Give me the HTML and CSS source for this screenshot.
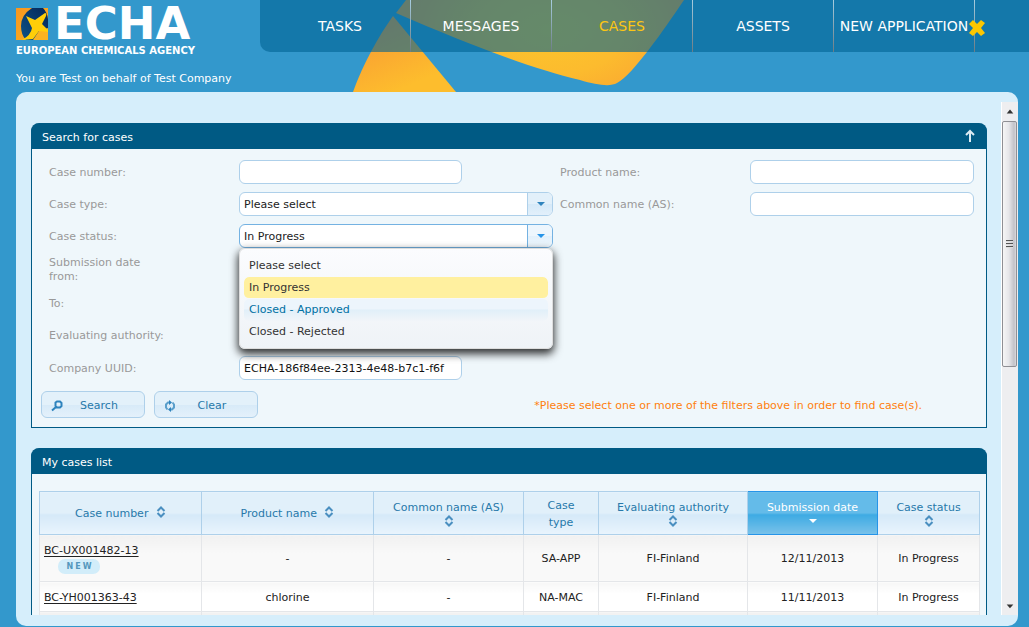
FILE: index.html
```html
<!DOCTYPE html>
<html lang="en">
<head>
<meta charset="utf-8">
<title>ECHA - Cases</title>
<link rel="stylesheet" href="styles.css">
</head>
<body>
<svg class="star" viewBox="0 0 340 92" aria-hidden="true">
  <defs>
    <radialGradient id="beam" gradientUnits="userSpaceOnUse" cx="200" cy="30" r="150" gradientTransform="translate(0 12) scale(1 .6)"><stop offset="0" stop-color="#fdc62c"/><stop offset="0.5" stop-color="#fcbb2e"/><stop offset="1" stop-color="#f9a232"/></radialGradient>
    <linearGradient id="foot" x1="0" y1="0.3" x2="0.4" y2="1"><stop offset="0" stop-color="#f99d33"/><stop offset="1" stop-color="#fdbd2d"/></linearGradient>
  </defs>
  <path fill="url(#foot)" d="M43 16C28 37 13 64 3 92H106Z"/>
  <path fill="url(#beam)" d="M46 13L56 0H334C324 15 310 35 300 48C287 65 275 79 267 83C260 87 247 85 230 80C180 68 120 45 46 13Z"/>
</svg>
<header class="top">
  <div class="brand">
    <svg class="emblem" viewBox="0 0 32 32" aria-hidden="true">
      <defs>
        <linearGradient id="gold" x1="0" y1="0" x2="1" y2="1"><stop offset="0" stop-color="#f8961f"/><stop offset="1" stop-color="#fbb321"/></linearGradient>
        <linearGradient id="navy" x1="0" y1="1" x2="1" y2="0"><stop offset="0" stop-color="#0f5286"/><stop offset="1" stop-color="#042659"/></linearGradient>
      </defs>
      <path fill="url(#gold)" d="M0 0H32V32H0Z"/>
      <path fill="url(#navy)" d="M16 0H27Q31 4 32 11V22Q31 28 27 31L26 32H10Q5 27 5 18Q5 7 16 0Z"/>
      <path fill="#fbb321" d="M23 23L32 20V32H17Z"/>
      <path fill="#ffce08" d="M10 8L19 12L29 5Q31 5 30 8L26 16L32 22V24L23 23L17 31L6 32Q15 27 16 20Z"/>
    </svg>
    <span class="wordmark">ECHA</span>
    <span class="tagline">EUROPEAN CHEMICALS AGENCY</span>
  </div>
  <nav class="menu">
    <a href="#">TASKS</a>
    <a href="#">MESSAGES</a>
    <a href="#" class="current">CASES</a>
    <a href="#">ASSETS</a>
    <a href="#">NEW APPLICATION</a>
    <button class="exit" type="button" aria-label="Log out"><svg viewBox="0 0 16 16" aria-hidden="true"><path fill="#fdc700" d="M0 4L4 0L8 4L12 0L16 3L12 8L16 13L12 16L8 12L4 16L0 13L4 8Z"/></svg></button>
  </nav>
  <p class="identity">You are Test on behalf of Test Company</p>
</header>
<main class="shell">
  <div class="view">
    <div class="content">
      <section class="panel">
        <div class="panel-head"><h2>Search for cases</h2>
          <button class="collapse" type="button" aria-label="Collapse"><svg viewBox="0 0 10 14" aria-hidden="true"><path fill="none" stroke="#dcebf3" stroke-width="2" d="M5 13V2M1 6L5 2L9 6"/></svg></button>
        </div>
        <form class="search">
          <div class="fields">
            <label for="num">Case number:</label><input id="num" type="text">
            <label for="prod">Product name:</label><input id="prod" type="text" class="wide">
            <label for="type">Case type:</label>
            <div class="combo"><select id="type"><option>Please select</option></select></div>
            <label for="common">Common name (AS):</label><input id="common" type="text" class="wide">
            <label for="status" class="first">Case status:</label>
            <div class="combo open"><select id="status"><option>In Progress</option></select>
              <ul class="options">
                <li>Please select</li>
                <li class="chosen">In Progress</li>
                <li class="hovered">Closed - Approved</li>
                <li>Closed - Rejected</li>
              </ul>
            </div>
            <span class="label first">Submission date<br>from:</span>
            <span class="label first">To:</span>
            <span class="label first">Evaluating authority:</span>
            <label for="uuid" class="first">Company UUID:</label><input id="uuid" type="text" value="ECHA-186f84ee-2313-4e48-b7c1-f6f">
          </div>
          <div class="actions">
            <button type="button"><svg viewBox="0 0 12 12" aria-hidden="true"><path fill="none" stroke="#2e83bd" stroke-width="2" d="M4.500 2.500L6 1.500H9L10.500 3V6L9 7.500H6L4.500 6ZM5 7L1 10.500"/></svg><span>Search</span></button>
            <button type="button"><svg viewBox="0 0 12 12" aria-hidden="true"><path fill="none" stroke="#5b9fcb" stroke-width="2" d="M5 2.500H4L2 4.500V7.500L3.500 9.500M7 9.500H8L10 7.500V4.500L8.500 2.500"/><path fill="#2e83bd" d="M5 0L8 2.500L5 5ZM7 7V12L4 9.500Z"/></svg><span>Clear</span></button>
            <p>*Please select one or more of the filters above in order to find case(s).</p>
          </div>
        </form>
      </section>
      <section class="panel">
        <div class="panel-head"><h2>My cases list</h2></div>
        <div class="list">
          <table>
            <colgroup><col class="c-num"><col class="c-prod"><col class="c-common"><col class="c-type"><col class="c-auth"><col class="c-date"><col class="c-status"></colgroup>
            <thead><tr>
              <th>Case number <svg class="sort inline" viewBox="0 0 10 12"><path d="M1.500 5L5 1.500L8.500 5M1.500 7L5 10.500L8.500 7"/></svg></th>
              <th>Product name <svg class="sort inline" viewBox="0 0 10 12"><path d="M1.500 5L5 1.500L8.500 5M1.500 7L5 10.500L8.500 7"/></svg></th>
              <th>Common name (AS)<svg class="sort" viewBox="0 0 10 12"><path d="M1.500 5L5 1.500L8.500 5M1.500 7L5 10.500L8.500 7"/></svg></th>
              <th>Case<br>type</th>
              <th>Evaluating authority<svg class="sort" viewBox="0 0 10 12"><path d="M1.500 5L5 1.500L8.500 5M1.500 7L5 10.500L8.500 7"/></svg></th>
              <th class="active">Submission date<svg class="sort down" viewBox="0 0 10 12"><path d="M1 4H9L5 8Z"/></svg></th>
              <th>Case status<svg class="sort" viewBox="0 0 10 12"><path d="M1.500 5L5 1.500L8.500 5M1.500 7L5 10.500L8.500 7"/></svg></th>
            </tr></thead>
            <tbody>
              <tr class="odd tall"><td class="ref"><a href="#">BC-UX001482-13</a><span class="badge">NEW</span></td><td>-</td><td>-</td><td>SA-APP</td><td>FI-Finland</td><td>12/11/2013</td><td>In Progress</td></tr>
              <tr><td class="ref"><a href="#">BC-YH001363-43</a></td><td>chlorine</td><td>-</td><td>NA-MAC</td><td>FI-Finland</td><td>11/11/2013</td><td>In Progress</td></tr>
              <tr class="odd"><td></td><td></td><td></td><td></td><td></td><td></td><td></td></tr>
            </tbody>
          </table>
        </div>
      </section>
    </div>
    <div class="scrollbar" aria-hidden="true">
      <svg viewBox="0 0 17 18"><path fill="#333" d="M5 11L8.500 7L12 11Z"/></svg>
      <div class="thumb"><i></i><i></i><i></i></div>
      <svg class="end" viewBox="0 0 17 18"><path fill="#333" d="M5 8H12L8.500 12Z"/></svg>
    </div>
  </div>
</main>
</body>
</html>
```

FILE: styles.css
```css
* { box-sizing: border-box; }

body {
  margin: 0;
  height: 100vh;
  overflow: hidden;
  display: flex;
  flex-direction: column;
  background: #3398cc;
  color: #222;
  font: 11px/14px "DejaVu Sans", Verdana, sans-serif;
  position: relative;
}

h2, p, ul { margin: 0; padding: 0; font-size: inherit; font-weight: normal; }
button, input, select { font: inherit; }

/* Decorative star behind the menu */
.star { position: absolute; left: 350px; top: 0; width: 340px; height: 92px; }

/* Header */
.top {
  position: relative;
  flex: none;
  display: grid;
  grid-template-columns: 260px minmax(0, 1fr);
  grid-template-rows: 52px 40px;
}
.brand {
  padding: 8px 0 0 16px;
  display: grid;
  grid-template-columns: 32px 1fr;
  grid-template-rows: 32px 12px;
  column-gap: 6px;
  row-gap: 4px;
  color: #fff;
  white-space: nowrap;
}
.emblem { width: 32px; height: 32px; }
.wordmark { font-size: 45px; line-height: 32px; font-weight: bold; }
.tagline { grid-column: span 2; font-size: 10px; line-height: 14px; font-weight: bold; }
.menu {
  display: flex;
  padding-left: 10px;
  background: rgba(0, 98, 146, 0.6);
  border-bottom-left-radius: 10px;
}
.menu a {
  flex: 0 0 141px;
  display: flex;
  align-items: center;
  justify-content: center;
  border-right: 1px solid;
  border-image: linear-gradient(#a8cfe2, #6b7a82) 1;
  color: #fff;
  font-size: 14px;
  text-decoration: none;
  white-space: nowrap;
}
.menu a.current { color: #fdc613; }
.exit {
  align-self: center;
  margin: 4px 0 0 -6px;
  padding: 0;
  border: 0;
  background: none;
  position: relative;
}
.exit svg { display: block; width: 16px; height: 16px; }
.identity { grid-column: span 2; padding: 20px 0 0 16px; color: #fff; }

/* Main container */
.shell {
  position: relative;
  flex: 1;
  min-height: 0;
  margin: 0 11px 1px 16px;
  padding: 10px 0 11px;
  border-radius: 10px;
  background: #d6eefb;
  display: flex;
}
.view { flex: 1; min-width: 0; display: flex; overflow: hidden; }
.content { flex: 1; min-width: 0; padding: 21px 14px 0 15px; overflow: hidden; }

.panel {
  margin-bottom: 20px;
  border: 1px solid #005a84;
  border-top: 0;
  border-radius: 9px 9px 0 0;
  background: #eff7fb;
}
.panel-head {
  display: flex;
  align-items: center;
  justify-content: space-between;
  height: 26px;
  margin: 0 -1px;
  padding: 3px 12px 0 11px;
  border-radius: 8px 8px 0 0;
  background: #005a84;
  color: #fff;
}
.collapse { padding: 0 0 3px; border: 0; background: none; }
.collapse svg { display: block; width: 10px; height: 14px; }

/* Search form */
.search { padding: 11px 9px 9px; }
.fields {
  display: grid;
  grid-template-columns: 190px minmax(0, 1fr) 190px 224px;
  grid-auto-rows: minmax(24px, auto);
  gap: 8px 0;
  align-items: center;
  padding: 0 3px 0 8px;
  color: #999;
}
.fields label { padding-top: 2px; }
.first { grid-column: 1; }
.fields input {
  width: 223px;
  height: 24px;
  padding: 0 4px;
  border: 1px solid #aed0ea;
  border-radius: 6px;
  background: #fff;
  color: #111;
}
.fields input.wide { width: 100%; }
.combo { position: relative; width: 314px; }
.combo select {
  display: block;
  width: 100%;
  height: 24px;
  padding: 1px 30px 0 4px;
  border: 1px solid #aed0ea;
  border-radius: 6px;
  background: #fff;
  color: #222;
  appearance: none;
}
.combo::before {
  content: "";
  position: absolute;
  right: 1px;
  top: 1px;
  width: 24px;
  height: 22px;
  border-left: 1px solid #aed0ea;
  border-radius: 0 5px 5px 0;
  background: linear-gradient(#e2f0fa 50%, #d5e9f8 50%, #e2f0fb);
  pointer-events: none;
}
.combo::after {
  content: "";
  position: absolute;
  right: 8px;
  top: 10px;
  border: 4px solid transparent;
  border-top-color: #2e83bd;
  border-bottom: 0;
  pointer-events: none;
}
.combo.open select { border-color: #74b2e2; }
.combo.open::before { border-color: #74b2e2; background: linear-gradient(#edf6fd 50%, #e2f0fb 50%, #eef7fd); }
.combo.open::after { border-top-color: #2694e8; }
.options {
  position: absolute;
  z-index: 2;
  top: 24px;
  left: 0;
  right: 0;
  padding: 6px 4px 5px;
  border: 1px solid #ddd;
  border-radius: 6px;
  background: linear-gradient(#fbfcfe, #eff3f7);
  box-shadow: 0 4px 8px 1px rgba(0, 0, 0, 0.8);
  list-style: none;
  color: #333;
}
.options li { height: 22px; padding: 4px 5px; border-radius: 5px; }
.options .chosen { background: #fff09f; background-clip: padding-box; border-bottom: 1px solid transparent; }
.options .hovered { background: linear-gradient(#edf5fc 45%, #e1eff9 50%, #f1f5f9); color: #0070a3; }

.actions { display: flex; align-items: center; gap: 9px; margin-top: 11px; }
.actions button {
  display: flex;
  align-items: center;
  width: 104px;
  height: 27px;
  padding: 2px 9px 0;
  border: 1px solid #aed0ea;
  border-radius: 6px;
  background: linear-gradient(#e3f1fa 50%, #d7eaf8 50%, #e4f1fb);
  color: #2779aa;
}
.actions button svg { width: 12px; height: 12px; }
.actions button span { flex: 1; text-align: center; }
.actions p { margin-left: auto; padding: 2px 55px 0 0; color: #ff7f0e; }

/* Case table */
.list { padding: 17px 8px 17px 7px; }
table { width: 100%; table-layout: fixed; border-collapse: collapse; }
.c-num { width: 162px; }
.c-prod { width: 172px; }
.c-common { width: 150px; }
.c-type { width: 75px; }
.c-auth { width: 149px; }
.c-date { width: 130px; }
.c-status { width: 102px; }
th {
  height: 43px;
  padding: 1px 4px 0;
  border: 1px solid #aed0ea;
  background: linear-gradient(#e1f0fa 50%, #d5e9f8 52%, #e9f4fd);
  color: #2779aa;
  font-weight: normal;
  line-height: 17px;
}
.sort {
  display: block;
  width: 10px;
  height: 12px;
  margin: -1px auto 1px;
  fill: none;
  stroke: #4a8fc0;
  stroke-width: 2;
}
.sort.inline { display: inline-block; margin: 0 0 0 4px; vertical-align: -1px; }
.sort.down { fill: #fff; stroke: none; }
th.active {
  border: 1px solid #2694e8;
  background: linear-gradient(#64bbe9 50%, #3caae3 52%, #7ac2ea);
  color: #fff;
}
td {
  height: 30px;
  padding: 2px 4px 0;
  border: 1px solid #e4e6e9;
  background: linear-gradient(#f7f7f7, #fff 40%);
  text-align: center;
  color: #222;
}
.odd td { background: linear-gradient(#f1f1f1, #f9f9f9 40%); }
.tall td { height: 47px; }
td.ref { text-align: left; }
td a { color: #222; text-decoration: underline; text-underline-offset: 2px; }
.badge {
  display: block;
  width: 42px;
  height: 15px;
  margin: 1px 0 0 14px;
  padding-left: 2px;
  border-radius: 7px;
  background: #d2edfa;
  color: #5497bd;
  font-size: 8px;
  line-height: 16px;
  font-weight: bold;
  letter-spacing: 2px;
  text-align: center;
}

/* Scroll bar */
.scrollbar {
  flex: 0 0 17px;
  display: flex;
  flex-direction: column;
  background: #eeeef0;
  border-left: 1px solid #fff;
}
.scrollbar svg { flex: none; width: 16px; height: 19px; }
.scrollbar .end { margin-top: auto; }
.thumb {
  flex: 0 0 48%;
  display: flex;
  flex-direction: column;
  align-items: center;
  justify-content: center;
  gap: 1px;
  margin: 0 1px 0 0;
  border: 1px solid #8f8f94;
  border-radius: 2px;
  background: linear-gradient(90deg, #f6f6f6, #e6e6e9 45%, #c2c2c8 85%, #dadadd);
}
.thumb i { width: 7px; height: 2px; background: #555; border-bottom: 1px solid #ddd; }
```
